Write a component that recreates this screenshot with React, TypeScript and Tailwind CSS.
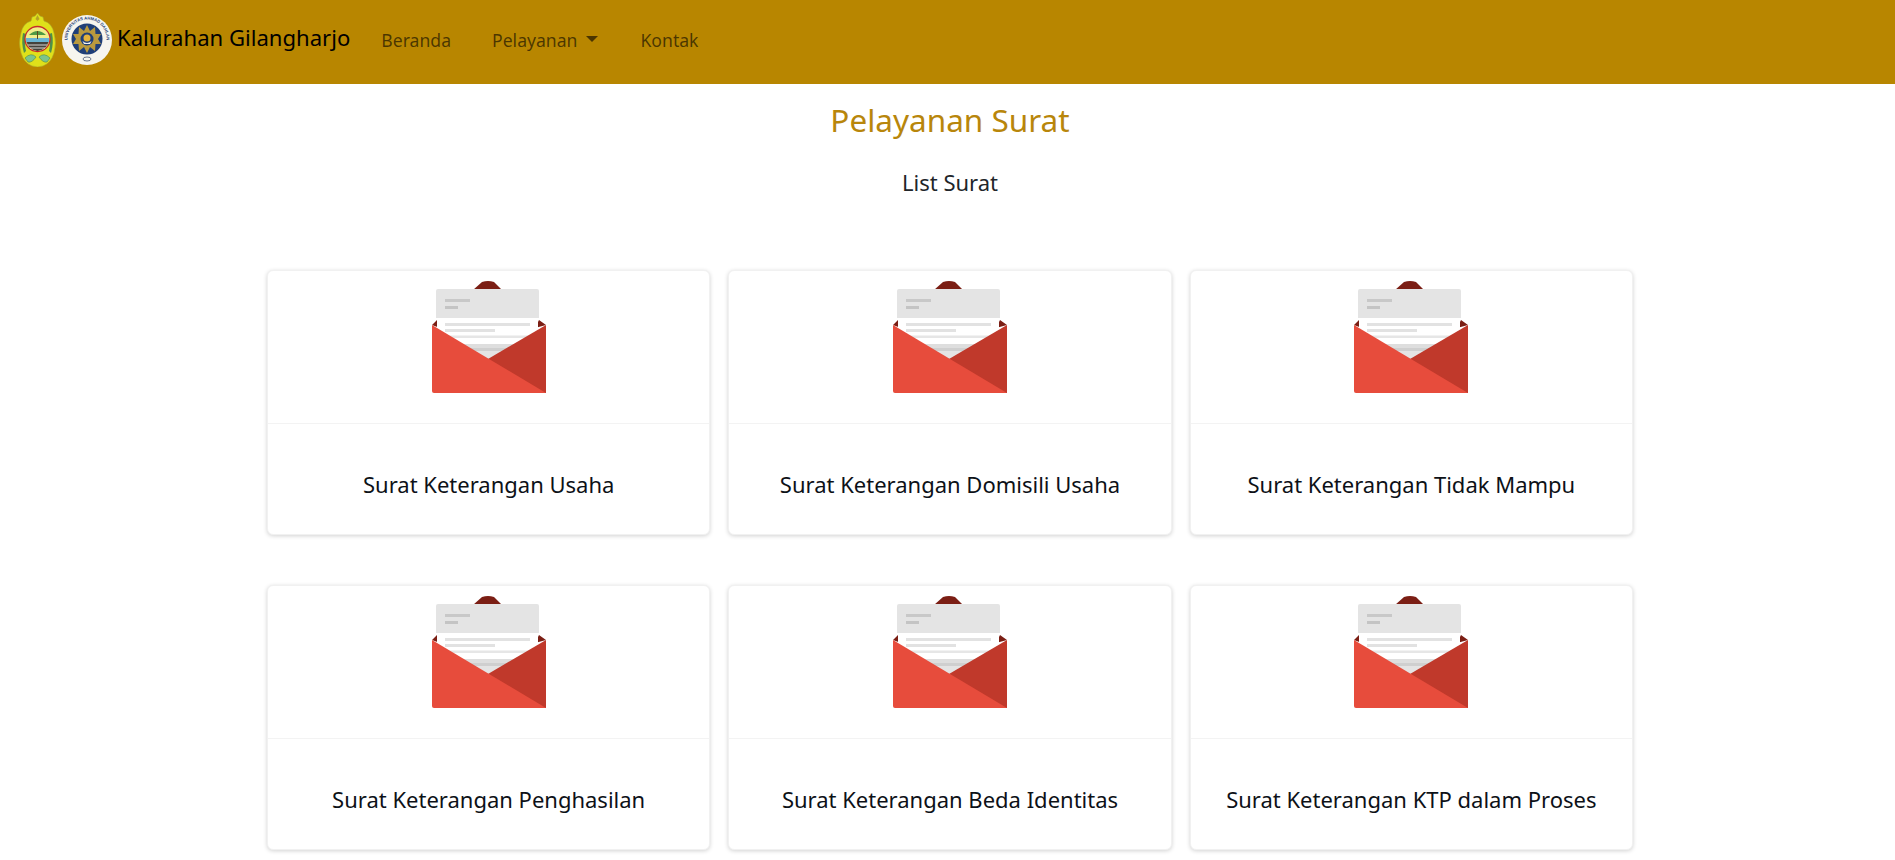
const surat = [
  "Surat Keterangan Usaha",
  "Surat Keterangan Domisili Usaha",
  "Surat Keterangan Tidak Mampu",
  "Surat Keterangan Penghasilan",
  "Surat Keterangan Beda Identitas",
  "Surat Keterangan KTP dalam Proses",
];

function Envelope() {
  return (
    <svg width="114" height="113" viewBox="0 0 114 113">
      <path d="M41 9 L50 1 Q56 -1 62 1 L70 9 Z" fill="#7b1e14" />
      <path d="M0 44 L5 39 L8 47 Z M114 44 L107 39 L103 47 Z" fill="#7b1e14" />
      <path d="M5 30 H106 V72 L56 95 L5 72 Z" fill="#ffffff" />
      <rect x="13" y="42" width="85" height="3" fill="#e2e2e2" />
      <rect x="13" y="48" width="50" height="3" fill="#e2e2e2" />
      <rect x="13" y="54.500" width="85" height="2.500" fill="#e6e6e6" />
      <rect x="13" y="63" width="85" height="4" fill="#dedede" />
      <rect x="13" y="67" width="85" height="3" fill="#cfcfcf" />
      <rect x="13" y="70" width="85" height="10" fill="#e4e4e4" />
      <path d="M6 8 H105 Q107 8 107 10 V37 H4 V10 Q4 8 6 8 Z" fill="#e4e4e4" />
      <rect x="13" y="18" width="25" height="3" fill="#c8c8c8" />
      <rect x="13" y="25" width="13" height="3" fill="#c4c4c4" />
      <path d="M114 44 V112 H100 L56 78 Z" fill="#c0392b" />
      <path d="M0 44 L114 112 H2 Q0 112 0 110 Z" fill="#e74c3c" />
    </svg>
  );
}

function CrestLogo() {
  return (
    <svg width="37" height="54" viewBox="0 0 37 54">
      <path d="M18.500 0 L21 3 L24 4 L25 8 Q33 10 35 20 Q38 30 35 40 Q32 50 24 53 Q18.500 55 13 53 Q5 50 2 40 Q-1 30 2 20 Q4 10 12 8 L13 4 L16 3 Z" fill="#dfe01a" stroke="#a9a52b" strokeWidth="0.6" />
      <path d="M18.500 2 L20.500 6 L18.500 8 L16.500 6 Z" fill="#b5a228" />
      <path d="M4 20 Q2 30 5 40 L7 38 Q5 30 7 21 Z" fill="#4f8f4a" />
      <path d="M33 20 Q35 30 32 40 L30 38 Q32 30 30 21 Z" fill="#4f8f4a" />
      <circle cx="18.500" cy="26" r="12.500" fill="#f0ee8a" stroke="#c62a2a" strokeWidth="1.300" />
      <path d="M7 25 H30 V29 H7 Z" fill="#69b5d4" />
      <path d="M7.500 29 H29.500 Q27 37 18.500 38 Q10 37 7.500 29 Z" fill="#45423c" />
      <path d="M9 32 H28 M11 35 H26" stroke="#e8e8e8" strokeWidth="0.9" />
      <path d="M10 22 Q18.500 14 27 22 Z" fill="#4f9a44" />
      <rect x="18" y="18" width="1" height="8" fill="#5c4a1e" />
      <path d="M6 45 Q12 39 17 44 Q13 50 9 49 Z M31 45 Q25 39 20 44 Q24 50 28 49 Z" fill="#7cc48c" stroke="#3b7d4a" strokeWidth="0.5" />
    </svg>
  );
}

function UadLogo() {
  return (
    <svg width="50" height="50" viewBox="0 0 50 50">
      <circle cx="25" cy="25" r="25" fill="#f6f5ef" />
      <circle cx="25" cy="24" r="15.500" fill="#1f3f78" />
      <defs>
        <path id="uad-arc" d="M8.100 33.750 A19.500 19.500 0 1 1 41.900 33.750" />
      </defs>
      <text fontSize="4.200" fontWeight="700" fill="#1f3f78" fontFamily="'Liberation Sans', sans-serif">
        <textPath href="#uad-arc" startOffset="50%" textAnchor="middle">
          UNIVERSITAS AHMAD DAHLAN
        </textPath>
      </text>
      <path
        d="M25 10 L28 16 L33 12 L33.500 19 L39 19 L36 24 L39 29 L33.500 29 L33 36 L28 32 L25 38 L22 32 L17 36 L16.500 29 L11 29 L14 24 L11 19 L16.500 19 L17 12 L22 16 Z"
        fill="#b99a3e"
      />
      <circle cx="25" cy="24" r="6.500" fill="#1f3f78" />
      <circle cx="25" cy="23" r="3.500" fill="#e3b23c" />
      <path d="M20.500 26 Q25 30 29.500 26 L28 29 H22 Z" fill="#f0f0f0" />
      <ellipse cx="25" cy="44" rx="4" ry="2" fill="none" stroke="#4a5a78" strokeWidth="0.8" />
    </svg>
  );
}

function Navbar() {
  return (
    <nav className="h-[84px] bg-[#b88600] flex items-center pl-[19px]">
      <div className="flex items-center gap-[6px] pb-[4px]">
        <CrestLogo />
        <UadLogo />
      </div>
      <a href="#" className="ml-[5px] text-[22.1px] leading-[36px] text-black pb-[10px]">
        Kalurahan Gilangharjo
      </a>
      <ul className="flex items-center ml-[31px] pb-[3px] text-[17.6px] text-black/60">
        <li className="mr-[41px]">Beranda</li>
        <li className="mr-[42px] flex items-center">
          Pelayanan
          <span className="ml-[9px] mb-[3px] border-x-[6px] border-t-[6px] border-x-transparent border-t-current" />
        </li>
        <li>Kontak</li>
      </ul>
    </nav>
  );
}

function Card({ title }: { title: string }) {
  return (
    <div className="h-[265px] bg-white rounded-[6px] border border-[#f1f1f1] shadow-[0_1px_4px_rgba(0,0,0,0.18)] flex flex-col">
      <div className="h-[153px] border-b border-[#f3f3f3] flex justify-center pt-[10px]">
        <Envelope />
      </div>
      <div className="flex-1 flex items-center justify-center pt-[11px] text-[22px] text-[#0d1117]">
        {title}
      </div>
    </div>
  );
}

export default function App() {
  return (
    <div className="min-h-screen bg-white font-['Noto_Sans',sans-serif] overflow-hidden">
      <Navbar />
      <main className="pl-[267px] pr-[262px]">
        <h1 className="text-center text-[31.5px] leading-[48px] text-[#b8860b] pt-[12px]">Pelayanan Surat</h1>
        <p className="text-center text-[22px] leading-[36px] text-[#212529] mt-[20px]">List Surat</p>
        <div className="grid grid-cols-3 gap-x-[18px] gap-y-[50px] mt-[70px]">
          {surat.map((s) => (
            <Card key={s} title={s} />
          ))}
        </div>
      </main>
    </div>
  );
}
